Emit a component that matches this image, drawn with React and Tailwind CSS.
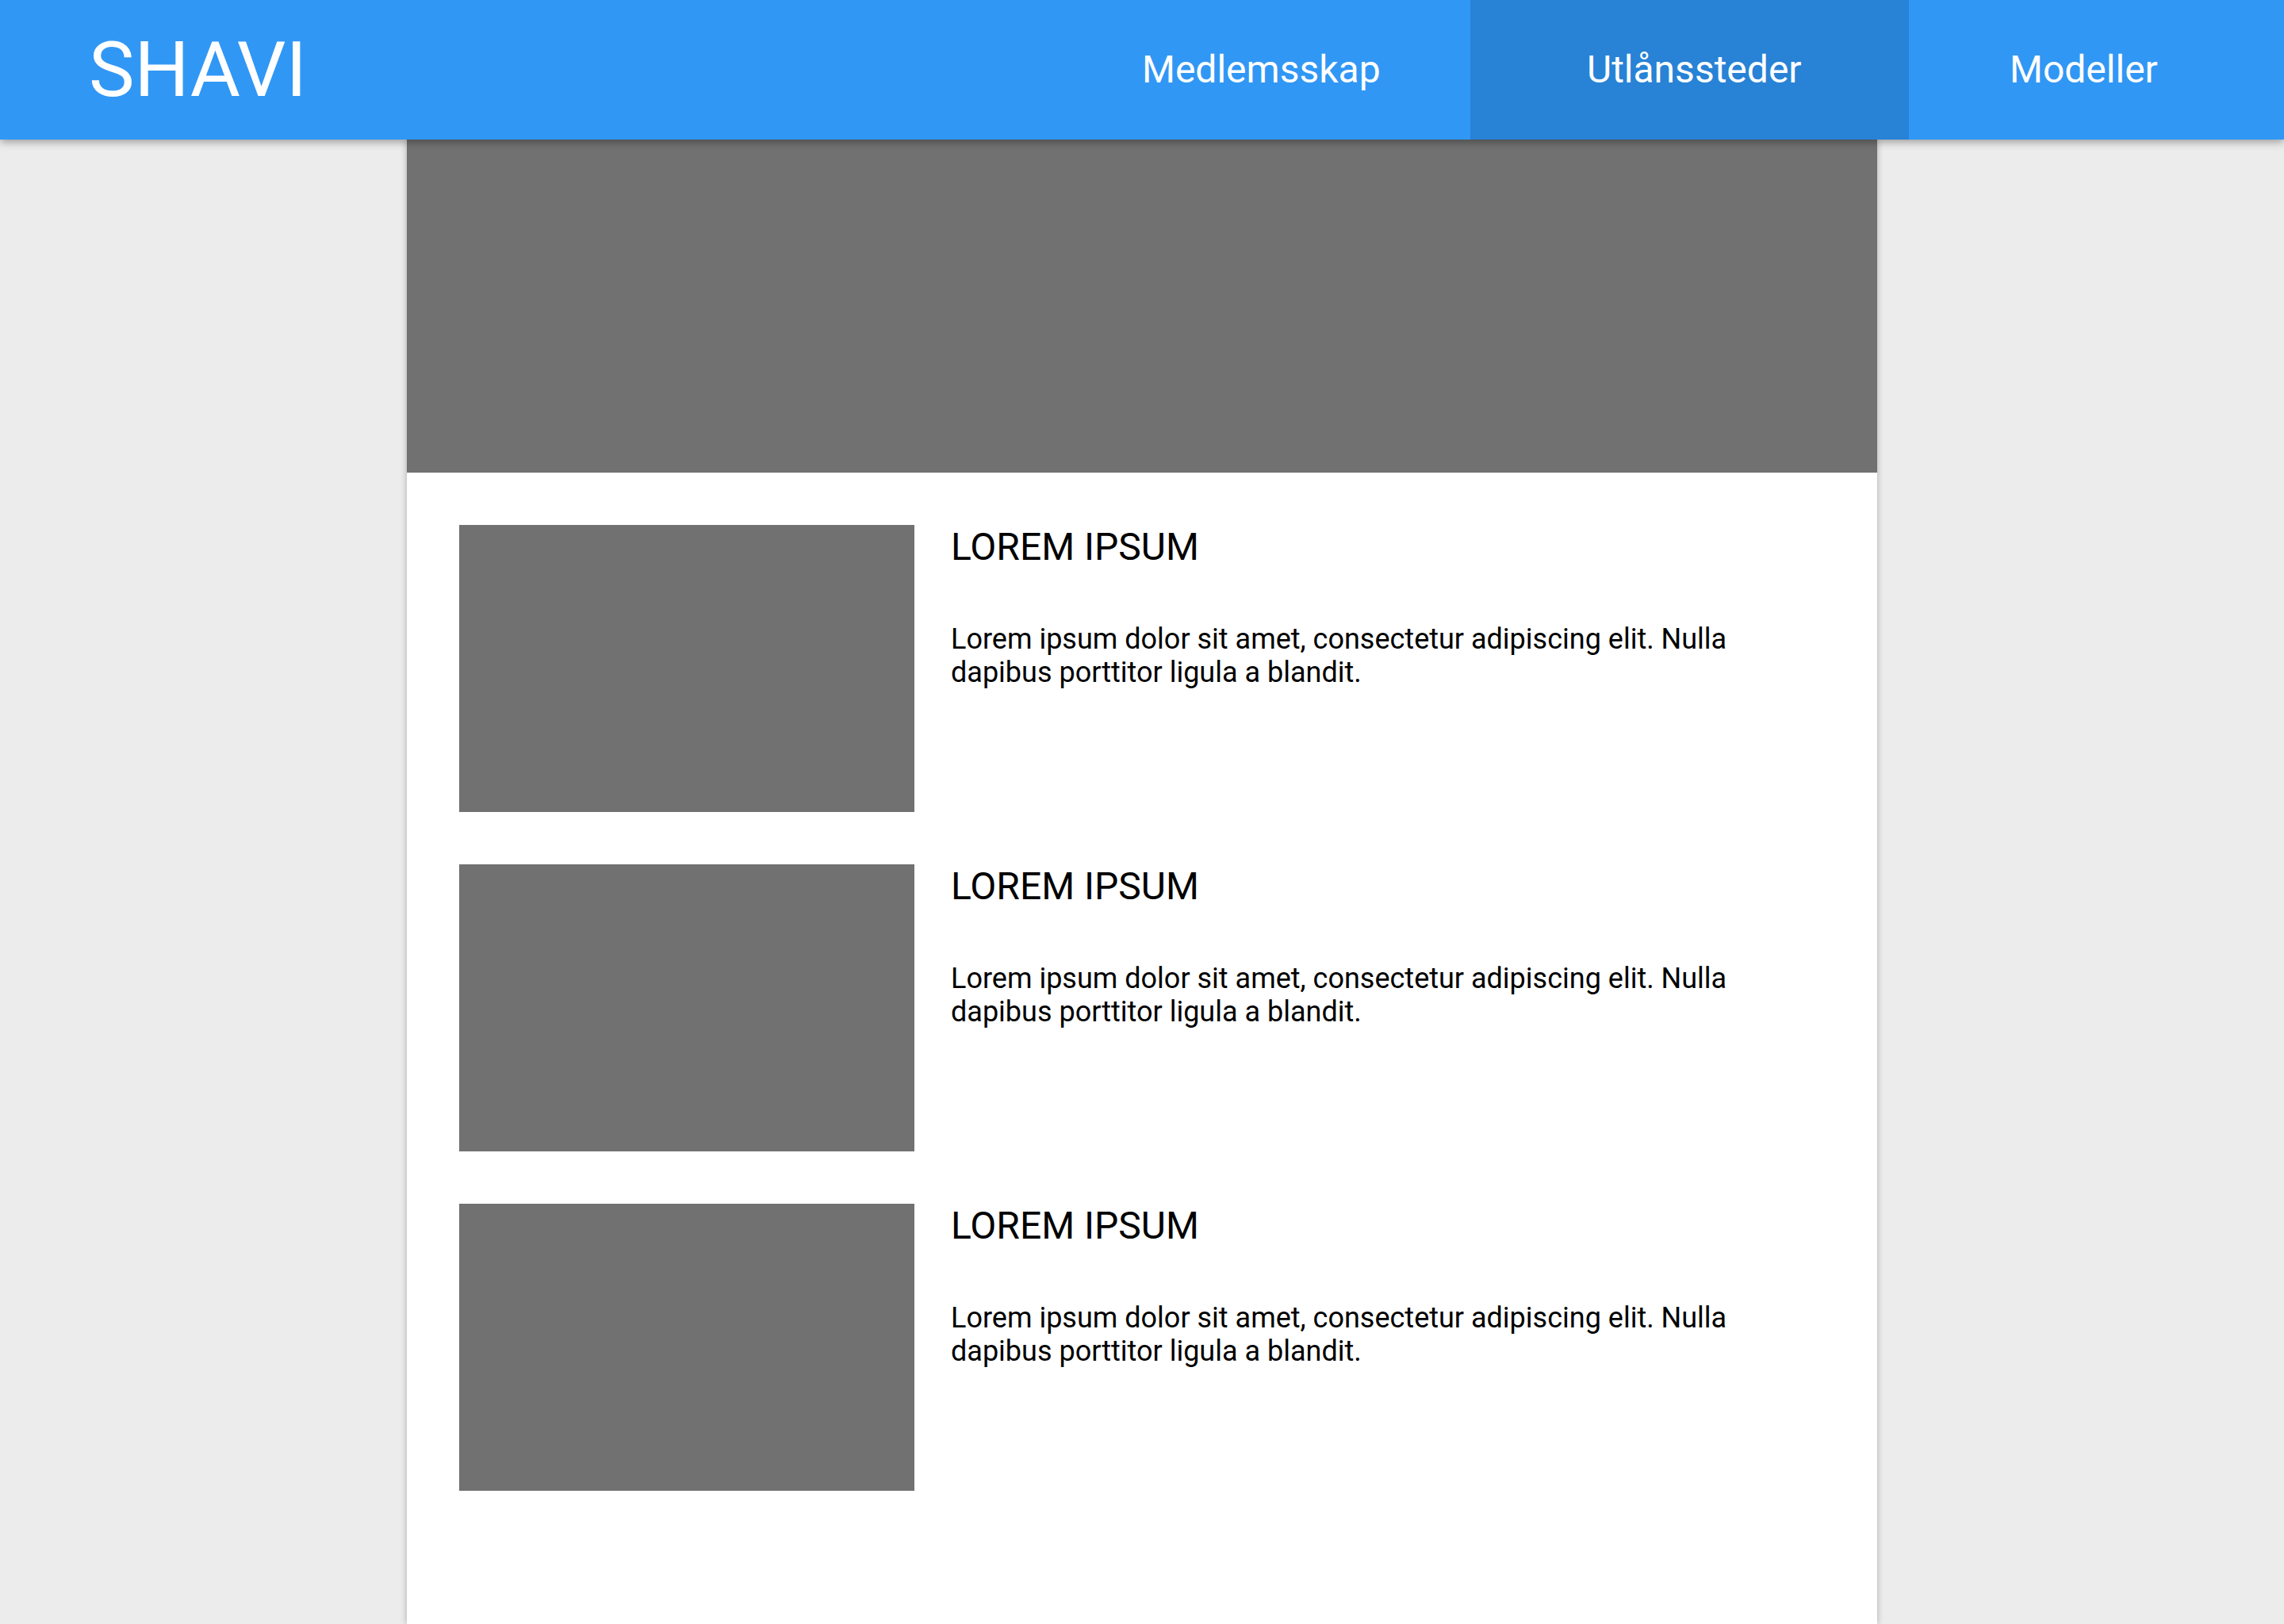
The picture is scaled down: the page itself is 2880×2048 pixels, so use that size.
import React from "react";

const navItems = [
  { label: "Medlemsskap", cls: "w-[553px] pl-[139px]", active: false },
  { label: "Utlånssteder", cls: "w-[553px] pl-[147px]", active: true },
  { label: "Modeller", cls: "w-[473px] pl-[127px]", active: false },
];

const articles = [1, 2, 3].map((n) => ({
  id: n,
  title: "LOREM IPSUM",
  text: "Lorem ipsum dolor sit amet, consectetur adipiscing elit. Nulla dapibus porttitor ligula a blandit.",
}));

const Header = () => (
  <header className="relative z-10 flex h-[176px] items-stretch bg-[#3197f5] shadow-[0_3px_10px_rgba(0,0,0,0.35)]">
    <div className="flex flex-1 items-center pl-[112px]">
      <span className="text-[97px] leading-none text-white">SHAVI</span>
    </div>
    <nav className="flex items-stretch">
      {navItems.map((item) => (
        <a
          key={item.label}
          href="#"
          className={`flex ${item.cls} items-center text-[48px] text-white ${
            item.active ? "bg-[#2882d6]" : ""
          }`}
        >
          {item.label}
        </a>
      ))}
    </nav>
  </header>
);

const Article = ({ title, text }) => (
  <div className="flex">
    <div className="h-[362px] w-[574px] shrink-0 bg-[#717171]" />
    <div className="ml-[46px]">
      <h2 className="text-[48px] leading-[56px] text-black">{title}</h2>
      <p className="mt-[67px] w-[1060px] text-[36px] leading-[42px] text-black">{text}</p>
    </div>
  </div>
);

export default function App() {
  return (
    <div className="flex min-h-[2048px] flex-col bg-[#ececec] font-['Roboto',sans-serif]">
      <Header />
      <main className="mx-auto flex w-[1854px] flex-1 flex-col bg-white shadow-[0_0_8px_rgba(0,0,0,0.28)]">
        <div className="h-[420px] bg-[#717171]" />
        <div className="flex flex-col gap-[66px] p-[66px]">
          {articles.map((a) => (
            <Article key={a.id} title={a.title} text={a.text} />
          ))}
        </div>
      </main>
    </div>
  );
}
